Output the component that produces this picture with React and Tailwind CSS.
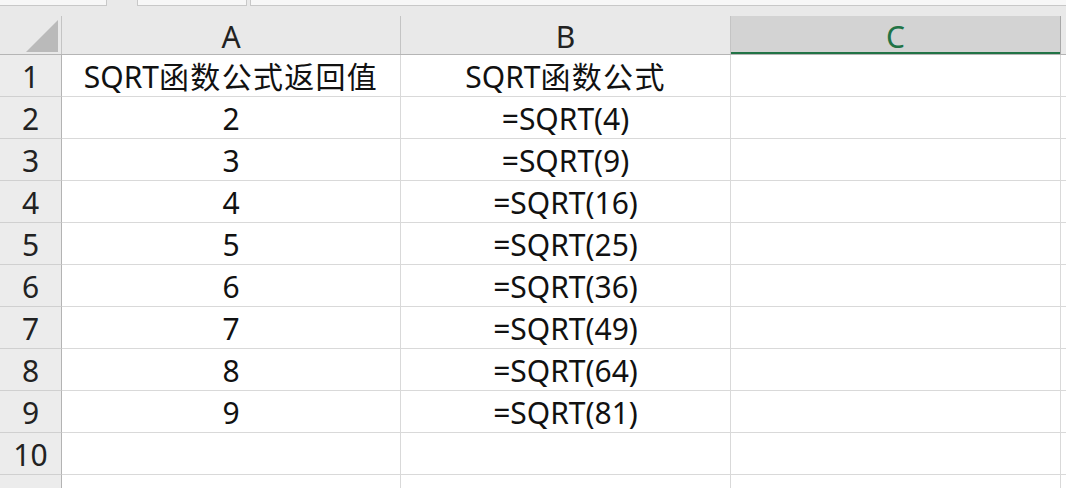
import React from "react";

const rows = [
  [["SQRT", "函数公式返回值"], ["SQRT", "函数公式"]],
  ["2", "=SQRT(4)"],
  ["3", "=SQRT(9)"],
  ["4", "=SQRT(16)"],
  ["5", "=SQRT(25)"],
  ["6", "=SQRT(36)"],
  ["7", "=SQRT(49)"],
  ["8", "=SQRT(64)"],
  ["9", "=SQRT(81)"],
  ["", ""],
  ["", ""],
];

function Cell({ v }) {
  if (Array.isArray(v)) {
    return (
      <>
        <span>{v[0]}</span>
        <span className="tracking-[1.3px]">{v[1]}</span>
      </>
    );
  }
  return v;
}

export default function App() {
  return (
    <div
      className="w-[1066px] h-[488px] overflow-hidden bg-[#e9e9e9] text-[30px] leading-none text-[#111]"
      style={{ fontFamily: '"Noto Sans", "Noto Sans CJK SC", sans-serif' }}
    >
      {/* top strip */}
      <div className="flex h-[6px]">
        <div className="w-[107px] bg-[#f7f7f7] border-r border-b border-[#c8c8c8]" />
        <div className="w-[30px] bg-[#e9e9e9]" />
        <div className="w-[110px] bg-[#f7f7f7] border-l border-r border-b border-[#c8c8c8]" />
        <div className="w-[3px] bg-[#e9e9e9]" />
        <div className="flex-1 bg-[#f7f7f7] border-l border-b border-[#c8c8c8]" />
      </div>
      <div className="h-[10px]" />
      {/* header row */}
      <div className="flex h-[39px] border-b border-[#b5b5b5]">
        <div className="w-[62px] border-r border-[#c4c4c4] relative">
          <svg className="absolute left-0 top-0" width="62" height="38" viewBox="0 0 62 38">
            <polygon points="58,4 58,36 26,36" fill="#bababa" />
          </svg>
        </div>
        <div className="w-[339px] flex items-center justify-center pt-[3px] border-r border-[#c4c4c4] text-[#222]">A</div>
        <div className="w-[330px] flex items-center justify-center pt-[3px] border-r border-[#c4c4c4] text-[#222]">B</div>
        <div className="w-[330px] flex items-center justify-center pt-[3px] bg-[#d3d3d3] border-r border-[#a8a8a8] shadow-[inset_0_-2px_0_#217346] text-[#217346]">
          C
        </div>
        <div className="flex-1" />
      </div>
      {/* rows */}
      {rows.map((r, i) => (
        <div key={i} className="flex h-[42px] bg-white">
          <div className="w-[62px] flex items-center justify-center pt-[3px] bg-[#ececec] border-r border-b border-r-[#b3b3b3] border-b-[#d0d0d0] text-[#222]">
            {i < 10 ? i + 1 : ""}
          </div>
          <div className="w-[339px] flex items-center justify-center pt-[3px] border-r border-b border-[#d9d9d9]">
            <Cell v={r[0]} />
          </div>
          <div className="w-[330px] flex items-center justify-center pt-[3px] border-r border-b border-[#d9d9d9]">
            <Cell v={r[1]} />
          </div>
          <div className="w-[330px] border-r border-b border-[#d9d9d9]" />
          <div className="flex-1 border-b border-[#d9d9d9]" />
        </div>
      ))}
    </div>
  );
}
